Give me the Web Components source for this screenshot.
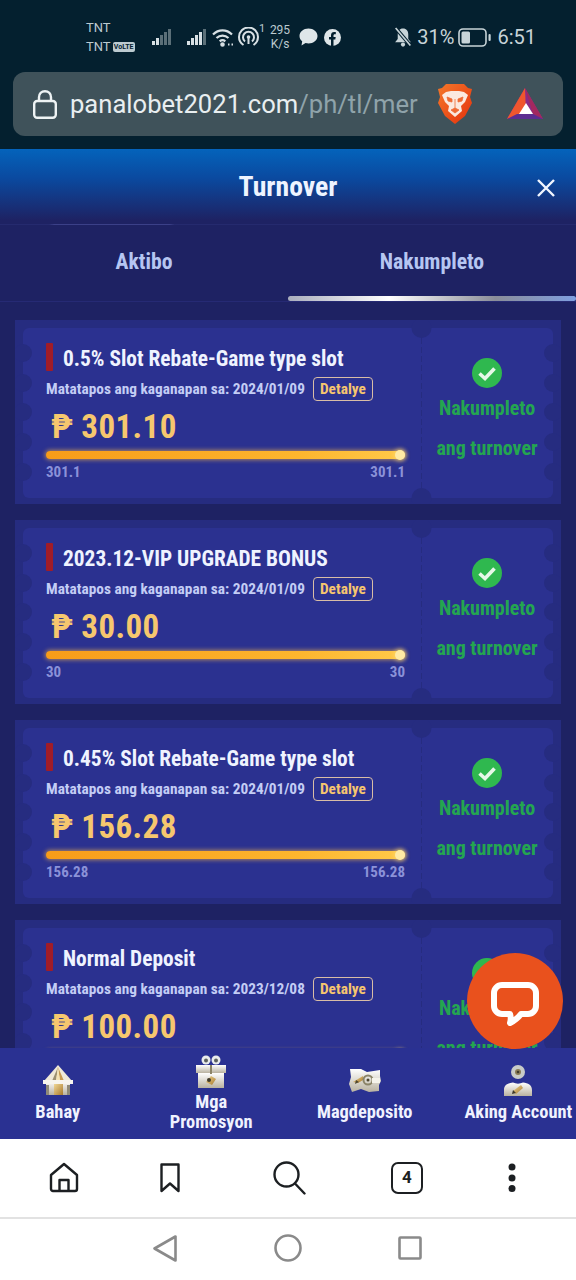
<!DOCTYPE html>
<html lang="en">
<head>
<meta charset="UTF-8">
<title>Turnover</title>
<style>
  html, body { margin: 0; padding: 0; }
  body {
    width: 576px;
    height: 1280px;
    overflow: hidden;
    display: flex;
    flex-direction: column;
    background: #1e2263;
    font-family: "Roboto Condensed", "Liberation Sans Narrow", Roboto, sans-serif;
  }
</style>
</head>
<body>
  <top-chrome></top-chrome>
  <turnover-modal>
    <ticket-card heading="0.5% Slot Rebate-Game type slot" ends="2024/01/09" amount="301.10" value="301.1"></ticket-card>
    <ticket-card heading="2023.12-VIP UPGRADE BONUS" ends="2024/01/09" amount="30.00" value="30"></ticket-card>
    <ticket-card heading="0.45% Slot Rebate-Game type slot" ends="2024/01/09" amount="156.28" value="156.28"></ticket-card>
    <ticket-card heading="Normal Deposit" ends="2023/12/08" amount="100.00" value="100"></ticket-card>
  </turnover-modal>
  <bottom-nav></bottom-nav>
  <browser-toolbar></browser-toolbar>
  <system-nav></system-nav>
  <chat-button></chat-button>

<script>
  const NARROW = `"Roboto Condensed", "Liberation Sans Narrow", Roboto, sans-serif`;

  class Base extends HTMLElement {
    constructor() {
      super();
      this.attachShadow({ mode: "open" });
    }
    render(css, html) {
      this.shadowRoot.innerHTML = `<style>${css}</style>${html}`;
    }
  }

  class TopChrome extends Base {
    connectedCallback() {
      this.render(`
        :host { display: block; height: 149px; flex: none; background: #04202f; color: #bccad0; font-family: Roboto, sans-serif; }
        .status { height: 72px; display: flex; justify-content: space-between; align-items: center; padding: 2px 40px 0 86px; box-sizing: border-box; }
        .group { display: flex; align-items: center; }
        .carrier { width: 51px; font-size: 13px; line-height: 19px; margin-top: 0; }
        .carrier div { display: flex; align-items: center; gap: 2px; }
        .volte { background: #bccad0; color: #04202f; font-size: 7px; font-weight: 700; line-height: 10px; width: 22px; text-align: center; border-radius: 2px; }
        .speed { font-size: 12px; line-height: 14px; text-align: center; width: 24px; margin-left: 3px; }
        .sup { font-size: 11px; align-self: flex-start; margin-top: 4px; width: 6px; }
        .big { font-size: 20px; color: #c8d4d8; }
        svg { display: block; flex: none; }
        .url { margin: 0 13px; height: 64px; background: #3f525a; border-radius: 12px; display: flex; align-items: center; padding: 0 0 0 20px; }
        .address { width: 355px; margin-left: 13px; font-size: 25.6px; white-space: nowrap; color: #8fa3aa; }
        .address b { font-weight: 400; color: #e8eef0; }
      `, `
        <div class="status">
          <div class="group">
            <div class="carrier"><div>TNT</div><div>TNT<span class="volte">VoLTE</span></div></div>
            <svg style="margin-left:15px" width="19" height="17" viewBox="0 0 19 17"><g fill="#5b6f78"><rect x="0" y="12" width="3" height="4" fill="#d8e0e4"/><rect x="4" y="9" width="3" height="7" fill="#d8e0e4"/><rect x="8" y="6" width="3" height="10"/><rect x="12" y="3" width="3" height="13"/><rect x="16" y="0" width="3" height="16"/></g></svg>
            <svg style="margin-left:16px" width="19" height="17" viewBox="0 0 19 17"><g fill="#d8e0e4"><rect x="0" y="12" width="3" height="4"/><rect x="4" y="9" width="3" height="7"/><rect x="8" y="6" width="3" height="10"/><rect x="12" y="3" width="3" height="13"/><rect x="16" y="0" width="3" height="16" fill="#5b6f78"/></g></svg>
            <svg style="margin-left:6px" width="22" height="19" viewBox="0 0 22 19" fill="none" stroke="#d8e0e4" stroke-width="2.2"><path d="M1 6.5C6.5 1 14.5 1 20 6.5"/><path d="M4.5 10C8 6.7 13 6.7 16.5 10"/><path d="M7.7 13.3C9.5 11.8 11.5 11.8 13.3 13.3"/><circle cx="10.5" cy="16.5" r="1.2" fill="#d8e0e4"/><path d="M16 16.5h1.5M19.5 16.5h1.5" stroke-width="2"/></svg>
            <svg style="margin-left:4px" width="21" height="20" viewBox="0 0 21 20" fill="none" stroke="#d8e0e4" stroke-width="2"><path d="M5.5 18C2.8 16.2 1 13.300 1 10a9.500 9.500 0 0 1 19 0c0 3.300-1.800 6.200-4.500 8"/><path d="M7 14.500A5.500 5.500 0 1 1 14 14.500"/><circle cx="10.500" cy="10" r="1.800" fill="#d8e0e4" stroke="none"/><path d="M10.500 11v6"/></svg>
            <span class="sup">1</span>
            <div class="speed">295<br>K/s</div>
            <svg style="margin-left:7px" width="19" height="18" viewBox="0 0 19 18"><path d="M9.500 0.500C14.500 0.500 18.500 3.800 18.500 8S14.500 15.500 9.500 15.500C8.500 15.500 7.500 15.400 6.600 15.100L2.500 17.500L3.200 13.300C1.500 12 0.500 10.100 0.500 8C0.500 3.800 4.500 0.500 9.500 0.500Z" fill="#dfe6e9"/></svg>
            <svg style="margin-left:6px" width="17" height="17" viewBox="0 0 17 17"><circle cx="8.500" cy="8.500" r="8.500" fill="#dfe6e9"/><path d="M7 17V10.500H5V8H7V6.300C7 4.200 8.200 3 10.100 3C11 3 11.800 3.100 11.800 3.100V5.200H10.800C9.800 5.200 9.500 5.800 9.500 6.500V8H11.700L11.300 10.500H9.500V17Z" fill="#04202f"/></svg>
          </div>
          <div class="group big">
            <svg width="18" height="20" viewBox="0 0 17 19"><path d="M8.500 1.500C11.800 1.500 13.500 4 13.500 7V11.500L16 14.500H1L3.500 11.500V7C3.500 4 5.200 1.500 8.500 1.500Z" fill="#c8d4d8"/><circle cx="8.500" cy="16.700" r="2" fill="#c8d4d8"/><path d="M1.500 1L15.500 17.500" stroke="#04202f" stroke-width="3.500"/><path d="M1.500 1L15.500 17.500" stroke="#c8d4d8" stroke-width="1.600"/></svg>
            <span style="margin-left:5px">31%</span>
            <svg style="margin-left:4px" width="33" height="19" viewBox="0 0 33 19" fill="none"><rect x="1" y="1" width="27" height="17" rx="4" stroke="#c8d4d8" stroke-width="1.600"/><rect x="3.500" y="3.500" width="8.500" height="12" rx="1.500" fill="#c8d4d8"/><rect x="30.500" y="6" width="2.200" height="7" rx="1" fill="#c8d4d8"/></svg>
            <span style="margin-left:6px">6:51</span>
          </div>
        </div>
        <div class="url">
          <svg width="24" height="29" viewBox="0 0 24 29" fill="none" stroke="#eef3f4" stroke-width="2.400"><rect x="1.200" y="11" width="21.600" height="16.800" rx="3"/><path d="M6 11V7.200C6 3.500 8.500 1.200 12 1.200S18 3.500 18 7.200V11"/></svg>
          <div class="address"><b>panalobet2021.com</b>/ph/tl/mer</div>
          <svg style="margin-left:12px" width="36" height="42" viewBox="0 0 36 42">
            <defs><linearGradient id="br" x1="0" y1="0" x2="1" y2="1"><stop offset="0" stop-color="#f4782a"/><stop offset="1" stop-color="#e5300c"/></linearGradient></defs>
            <path d="M9 1H27L31 5L35 6L33 14L35 20L28 33L18 41L8 33L1 20L3 14L1 6L5 5Z" fill="url(#br)"/>
            <path d="M9 9L14 8H22L27 9L31 12L28 19L24 23L25 28L18 34L11 28L12 23L8 19L5 12Z" fill="#fbe9df"/>
            <path d="M10 14L15 16L15 19L11 18ZM26 14L21 16L21 19L25 18ZM18 16V26M14 27L18 25L22 27L18 30Z" fill="#ef6a34" stroke="#ef6a34" stroke-width="0.800"/>
          </svg>
          <svg style="margin-left:34px" width="36" height="32" viewBox="0 0 36 32">
            <path d="M18 0L36 31H0Z" fill="#8d2a86"/>
            <path d="M18 0L0 31L19 26Z" fill="#f0562e"/>
            <path d="M18 0L36 31L26 26Z" fill="#a3285f"/>
            <path d="M0 31H36L26 26H10Z" fill="#5c2d91"/>
            <path d="M19 15L26 26H12Z" fill="#ffffff"/>
          </svg>
        </div>
      `);
    }
  }

  class TurnoverModal extends Base {
    connectedCallback() {
      this.render(`
        :host { display: flex; flex-direction: column; flex: 1; min-height: 0; background: #1e2263; font-family: ${NARROW}; }
        header { height: 76px; flex: none; display: grid; grid-template-columns: 1fr auto 1fr; align-items: center; background: linear-gradient(#0463bb, #0a4aa0 38%, #1e2263 95%); border-bottom: 1px solid #252a6e; border-image: linear-gradient(90deg, #252a6e 50px, #3b4088 55px, #3b4088 170px, #252a6e 175px) 1; box-sizing: border-box; }
        h1 { grid-column: 2; margin: 0; font-size: 27.7px; font-weight: 700; color: #eef4ff; line-height: 76px; }
        svg { justify-self: end; margin-right: 21px; margin-top: 1px; }
        .tabs { height: 77px; flex: none; display: grid; grid-template-columns: 1fr 1fr; box-sizing: border-box; border-bottom: 1px solid #262a74; }
        .tab { font-size: 21.7px; font-weight: 700; color: #b6c6f2; text-align: center; line-height: 74px; height: 76px; }
        .tab.on { position: relative; }
        .tab.on::after { content: ""; position: absolute; left: 0; right: 0; top: 71px; height: 5px; border-radius: 3px; background: linear-gradient(90deg, #a9adbd, #ffffff 35%, #8a8d99 72%, #7f9fe0); }
        .list { flex: 1; min-height: 0; overflow: hidden; padding: 18px 15px 0; display: flex; flex-direction: column; gap: 16px; }
      `, `
        <header>
          <h1>Turnover</h1>
          <svg width="18" height="18" viewBox="0 0 18 18" stroke="#f2f6ff" stroke-width="2.400"><path d="M1 1L17 17M17 1L1 17"/></svg>
        </header>
        <div class="tabs"><div class="tab">Aktibo</div><div class="tab on">Nakumpleto</div></div>
        <div class="list"><slot></slot></div>
      `);
    }
  }

  class TicketCard extends Base {
    connectedCallback() {
      const a = (n) => this.getAttribute(n);
      const bites = [33, 63, 92, 122, 152].map((y) =>
        `<circle cx="8" cy="${y}" r="9"/><circle cx="538" cy="${y}" r="9"/>`).join("");
      this.render(`
        :host { display: block; position: relative; flex: none; height: 184px; }
        .bg { position: absolute; left: 0; top: 0; }
        .row { position: relative; display: flex; height: 184px; }
        .left { width: 359px; margin-left: 31px; padding-top: 23px; box-sizing: border-box; }
        .right { width: 132px; margin-left: 16px; padding-top: 38px; text-align: center; box-sizing: border-box; }
        .title { display: flex; align-items: center; height: 30px; font-size: 21.4px; font-weight: 700; color: #eff3ff; white-space: nowrap; }
        .title i { width: 7px; height: 28px; background: #a01c28; margin-right: 10px; margin-top: -2px; border-radius: 1px; }
        .meta { display: flex; align-items: center; height: 24px; margin-top: 4px; font-size: 15.35px; font-weight: 700; color: #c3cdf5; white-space: nowrap; }
        .meta span { margin-left: 8px; width: 60px; height: 24px; box-sizing: border-box; border: 1px solid #d9bda6; border-radius: 4px; color: #f6c56f; text-align: center; line-height: 22px; }
        .amount { height: 40px; line-height: 40px; margin: 6px 0 0 5px; font-size: 33px; font-weight: 700; color: #f6c76e; letter-spacing: 0.4px; white-space: nowrap; }
        .bar { position: relative; height: 8px; margin-top: 4px; border-radius: 4px; background: linear-gradient(90deg, #f79c19, #fdb52e 70%, #ffc949); box-shadow: 0 0 4px 1px rgba(255, 190, 70, 0.6); }
        .bar::after { content: ""; position: absolute; right: 0; top: -1px; width: 10px; height: 10px; border-radius: 50%; background: #ffeaa5; box-shadow: 0 0 4px 1px rgba(255, 220, 120, 0.7); }
        .nums { display: flex; justify-content: space-between; height: 18px; line-height: 18px; margin-top: 4px; font-size: 15px; font-weight: 700; color: #8b92d8; }
        .check { display: block; margin: 0 auto; }
        .done { font-size: 20px; font-weight: 700; color: #24a650; line-height: 40px; }
        .done:first-of-type { margin-top: -0.5px; }
      `, `
        <svg class="bg" width="546" height="184" viewBox="0 0 546 184">
          <rect width="546" height="184" fill="#262c80"/>
          <rect x="8" y="8" width="530" height="170" rx="6" fill="#2b3190"/>
          <g fill="#262c80">${bites}<circle cx="406.500" cy="8" r="10"/><circle cx="406.500" cy="178" r="10"/></g>
          <path d="M406.500 18V168" stroke="#262c80" stroke-width="1" stroke-dasharray="6 3"/>
        </svg>
        <div class="row">
          <div class="left">
            <div class="title"><i></i>${a("heading")}</div>
            <div class="meta">Matatapos ang kaganapan sa: ${a("ends")}<span>Detalye</span></div>
            <div class="amount">₱ ${a("amount")}</div>
            <div class="bar"></div>
            <div class="nums"><div>${a("value")}</div><div>${a("value")}</div></div>
          </div>
          <div class="right">
            <svg class="check" width="30" height="30" viewBox="0 0 30 30"><circle cx="15" cy="15" r="15" fill="#2fb84f"/><path d="M7.500 15.500L13 20.500L22.500 10.500" fill="none" stroke="#e6f8e8" stroke-width="3.600"/></svg>
            <div class="done">Nakumpleto</div>
            <div class="done">ang turnover</div>
          </div>
        </div>
      `);
    }
  }

  class BottomNav extends Base {
    connectedCallback() {
      this.render(`
        :host { display: block; position: relative; flex: none; height: 91px; background: #2a3192; font-family: ${NARROW}; }
        .items { display: grid; grid-template-columns: repeat(4, 1fr); margin: 0 -19px; height: 91px; }
        .item { display: flex; flex-direction: column; align-items: center; justify-content: flex-end; text-align: center; font-size: 18.4px; font-weight: 700; color: #f0f2ff; line-height: 20px; }
        .item svg { display: block; }
        .one { padding-bottom: 17px; }
        .two { padding-bottom: 7px; }
      `, `
        <svg width="0" height="0" style="position:absolute"><defs>
          <linearGradient id="w" x1="0" y1="0" x2="0" y2="1"><stop offset="0" stop-color="#ffffff"/><stop offset="1" stop-color="#b9b2a0"/></linearGradient>
          <linearGradient id="g" x1="0" y1="0" x2="1" y2="1"><stop offset="0" stop-color="#f0d795"/><stop offset="1" stop-color="#a8792c"/></linearGradient>
        </defs></svg>
        <div class="items">
          <div class="item one">
            <svg width="30" height="31" viewBox="0 0 30 31" style="margin-bottom:6px">
              <path d="M15 0L29 16H1Z" fill="#efe9d8"/>
              <path d="M15 2L9 16H13Z" fill="#9b8f70"/><path d="M15 2L21 16H17Z" fill="#c59a52"/><path d="M15 2L13 16H17Z" fill="#f4e3b4"/>
              <path d="M3 16H27V30H3Z" fill="url(#w)"/><path d="M0 15H30V19H0Z" fill="#f7f5ee"/>
              <path d="M11 19H20V30H11Z" fill="url(#g)"/><path d="M3 20H6V30H3ZM24 20H27V30H24Z" fill="#8f8a78"/>
            </svg>
            <div>Bahay</div>
          </div>
          <div class="item two">
            <svg width="30" height="33" viewBox="0 0 30 33" style="margin-bottom:4px">
              <circle cx="10" cy="5" r="4.500" fill="#e9ecec"/><circle cx="10" cy="5.500" r="2" fill="#5d6160"/>
              <circle cx="20" cy="5" r="4.500" fill="#e9ecec"/><circle cx="20" cy="5.500" r="2" fill="#5d6160"/>
              <rect x="0" y="10" width="30" height="8" fill="url(#w)"/><rect x="2" y="18" width="26" height="15" fill="url(#w)"/>
              <path d="M14 10h2v9h-2Z" fill="#8c8468"/><path d="M15 21l5 3-4 6-6-3Z" fill="url(#g)"/><circle cx="13" cy="25" r="2" fill="#3f3a2a"/>
            </svg>
            <div>Mga<br>Promosyon</div>
          </div>
          <div class="item one">
            <svg width="32" height="25" viewBox="0 0 32 25" style="margin-bottom:9px">
              <path d="M1 1H12L18 4L31 2V8L32 13L30 17V23L20 24L12 21L3 24L0 16L2 9Z" fill="url(#w)"/>
              <path d="M4 14L14 8V12L9 15Z" fill="url(#g)"/><path d="M7 12L10 14L6 16Z" fill="#4c4630"/>
              <circle cx="19" cy="12" r="4.500" fill="none" stroke="#8b8468" stroke-width="2"/><circle cx="19" cy="12" r="1.500" fill="#4c4630"/>
              <path d="M23 10H31V15H23Z" fill="#f5f3ea"/>
            </svg>
            <div>Magdeposito</div>
          </div>
          <div class="item one">
            <svg width="28" height="31" viewBox="0 0 28 31" style="margin-bottom:6px">
              <circle cx="14" cy="7" r="7" fill="#c8cbc8"/><circle cx="14" cy="7" r="3" fill="#8a7c56"/><circle cx="14" cy="7" r="1.300" fill="#3f3a2a"/>
              <path d="M0 31V25C0 20 4 18 9 17.500C12 19 16 19 19 17.500C24 18 28 20 28 25V31Z" fill="url(#w)"/>
              <path d="M17 20L19 23L12 29L9 26Z" fill="url(#g)"/><path d="M9 25L12 28L8 29Z" fill="#3f3a2a"/>
            </svg>
            <div>Aking Account</div>
          </div>
        </div>
      `);
    }
  }

  class BrowserToolbar extends Base {
    connectedCallback() {
      this.render(`
        :host { display: block; flex: none; height: 78px; background: #ffffff; font-family: Roboto, sans-serif; }
        .bar { height: 78px; display: flex; align-items: center; padding-bottom: 1px; box-sizing: border-box; }
        svg { display: block; flex: none; }
        .tabs { width: 32px; height: 32px; margin-left: 85px; box-sizing: border-box; border: 2.500px solid #1c1f22; border-radius: 7px; text-align: center; font-size: 17px; font-weight: 700; line-height: 27px; color: #1c1f22; }
      `, `
        <div class="bar">
          <svg style="margin-left:49px" width="30" height="31" viewBox="0 0 30 31" fill="none" stroke="#1c1f22" stroke-width="2.400" stroke-linejoin="round"><path d="M2 13L15 2L28 13V27a2 2 0 0 1-2 2H4a2 2 0 0 1-2-2Z"/><path d="M10.500 29V18H19.500V29"/></svg>
          <svg style="margin-left:81px" width="20" height="30" viewBox="0 0 20 30" fill="none" stroke="#1c1f22" stroke-width="2.400" stroke-linejoin="round"><path d="M1.500 1.500H18.500V28L10 20.500L1.500 28Z"/></svg>
          <svg style="margin-left:93px" width="33" height="34" viewBox="0 0 33 34" fill="none" stroke="#1c1f22" stroke-width="2.400" stroke-linecap="round"><circle cx="13.500" cy="13.500" r="12"/><path d="M22 22.500L31.500 32.500"/></svg>
          <div class="tabs">4</div>
          <svg style="margin-left:85px" width="8" height="30" viewBox="0 0 8 30" fill="#1c1f22"><circle cx="4" cy="4" r="3.500"/><circle cx="4" cy="15" r="3.500"/><circle cx="4" cy="25.500" r="3.500"/></svg>
        </div>
      `);
    }
  }

  class SystemNav extends Base {
    connectedCallback() {
      this.render(`
        :host { display: block; flex: none; height: 63px; background: #ffffff; border-top: 2px solid #e2e2e2; box-sizing: border-box; }
        .bar { height: 61px; padding-bottom: 3px; box-sizing: border-box; display: flex; align-items: center; }
        svg { display: block; flex: none; }
      `, `
        <div class="bar">
          <svg style="margin-left:153px" width="24" height="27" viewBox="0 0 24 27" fill="none" stroke="#8a8a8a" stroke-width="2.600" stroke-linejoin="round"><path d="M22.500 1.500V25.500L1.500 13.500Z"/></svg>
          <svg style="margin-left:97px" width="28" height="28" viewBox="0 0 28 28" fill="none" stroke="#8a8a8a" stroke-width="2.600"><circle cx="14" cy="14" r="12.500"/></svg>
          <svg style="margin-left:96px" width="24" height="24" viewBox="0 0 24 24" fill="none" stroke="#8a8a8a" stroke-width="2.600" stroke-linejoin="round"><rect x="1.500" y="1.500" width="21" height="21" rx="1"/></svg>
        </div>
      `);
    }
  }

  class ChatButton extends Base {
    connectedCallback() {
      this.render(`
        :host { position: absolute; left: 467px; top: 953px; width: 96px; height: 96px; border-radius: 50%; background: #e9511d; display: flex; align-items: center; justify-content: center; }
        svg { display: block; margin-top: 5px; }
      `, `
        <svg width="48" height="44" viewBox="0 0 48 44" fill="none"><path d="M11 3H37a8 8 0 0 1 8 8V24a8 8 0 0 1-8 8H30C27 36 23 39 19 41C20 38 20 35 19 32H11a8 8 0 0 1-8-8V11a8 8 0 0 1 8-8Z" stroke="#ffffff" stroke-width="6" stroke-linejoin="round"/></svg>
      `);
    }
  }

  customElements.define("top-chrome", TopChrome);
  customElements.define("turnover-modal", TurnoverModal);
  customElements.define("ticket-card", TicketCard);
  customElements.define("bottom-nav", BottomNav);
  customElements.define("browser-toolbar", BrowserToolbar);
  customElements.define("system-nav", SystemNav);
  customElements.define("chat-button", ChatButton);
</script>
</body>
</html>
